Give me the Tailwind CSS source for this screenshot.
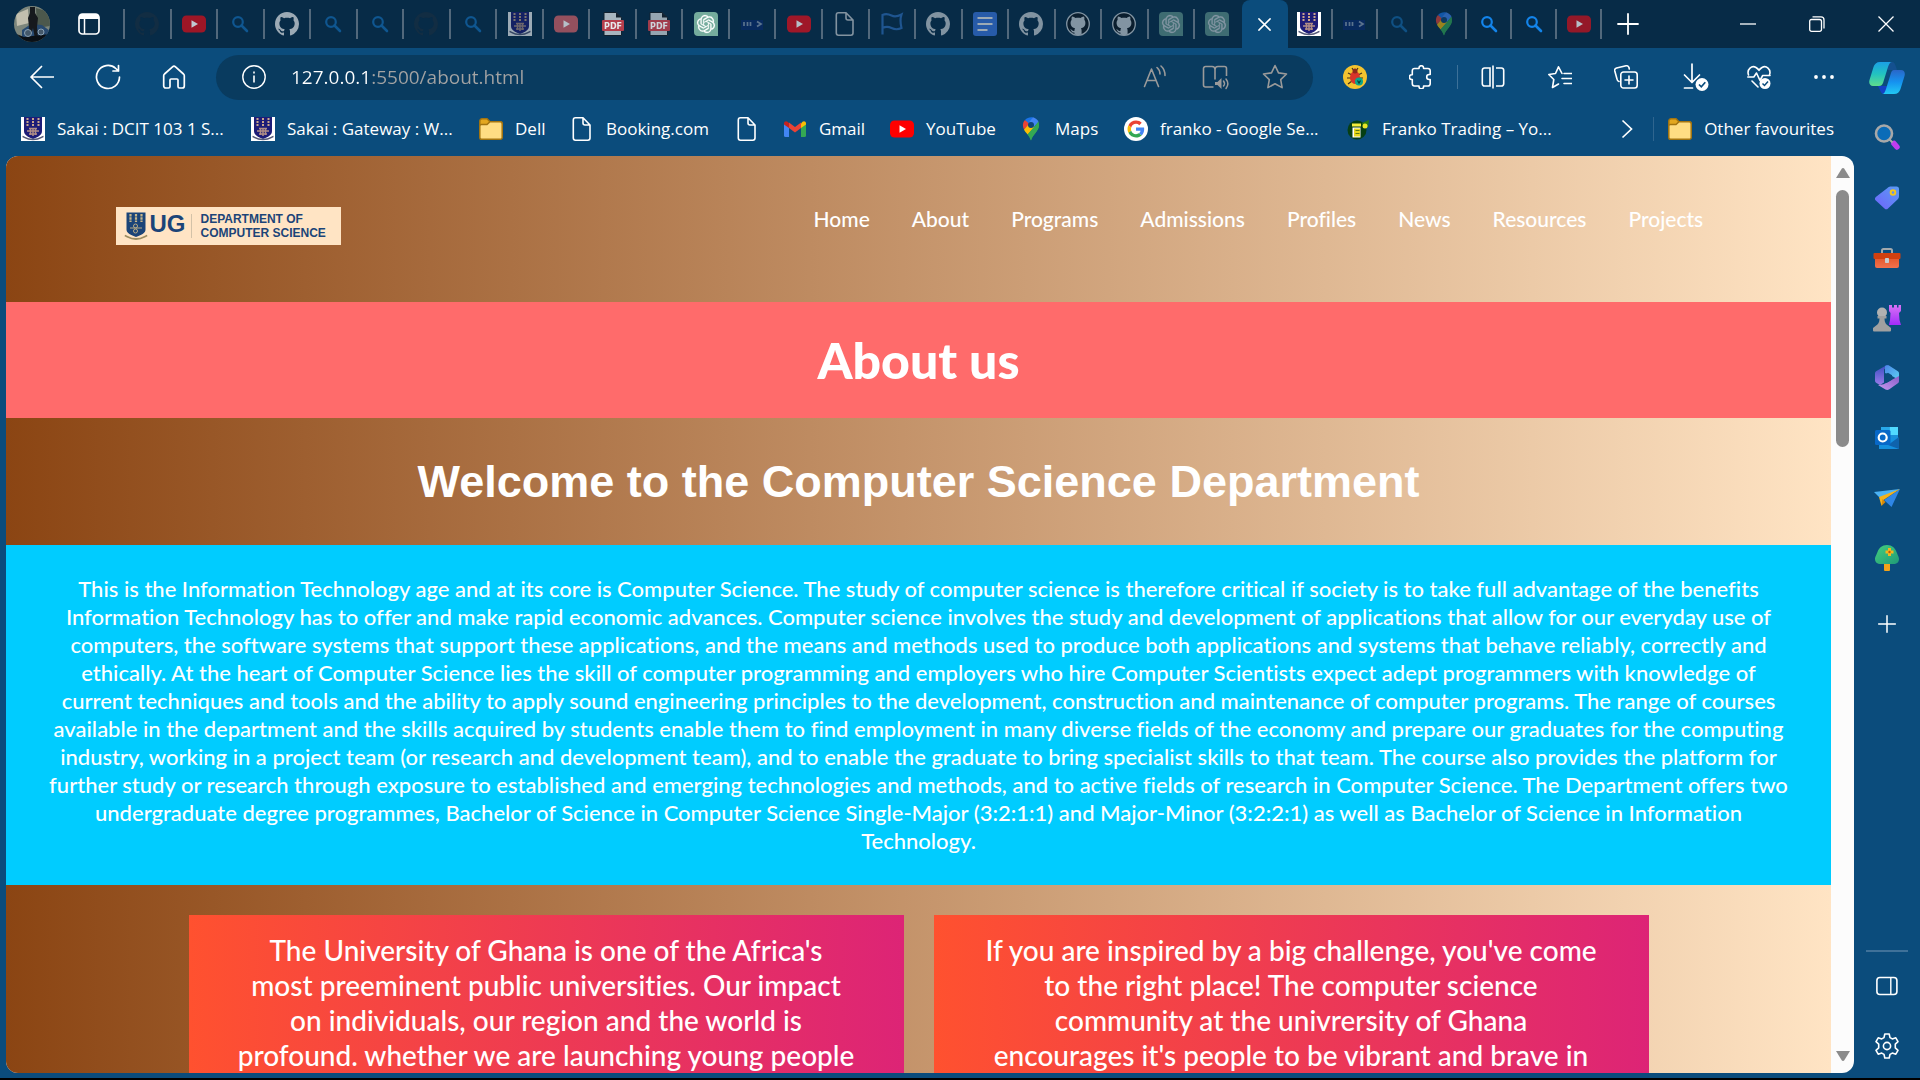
<!DOCTYPE html>
<html lang="en">
<head>
<meta charset="utf-8">
<title>About us</title>
<script src="https://cdn.jsdelivr.net/npm/@tailwindcss/browser@4"></script>
</head>
<body class="flex h-screen flex-col overflow-hidden border-b-2 border-black bg-[#0b4c7c] font-['Open_Sans',sans-serif] text-white">

<svg class="absolute h-0 w-0" aria-hidden="true">
  <defs>
    <linearGradient id="cp1" x1="0" y1="0" x2="0" y2="1"><stop offset="0" stop-color="#1ba0e6"/><stop offset=".5" stop-color="#22c3c0"/><stop offset="1" stop-color="#5fdc8c"/></linearGradient>
    <linearGradient id="cp2" x1="0" y1="0" x2="0" y2="1"><stop offset="0" stop-color="#2a66c8"/><stop offset=".5" stop-color="#1592f0"/><stop offset="1" stop-color="#22c8f4"/></linearGradient>
    <linearGradient id="tagG" x1="1" y1="0" x2="0" y2="1"><stop offset="0" stop-color="#5a9cf5"/><stop offset="1" stop-color="#6f63fb"/></linearGradient>
    <linearGradient id="tbG" x1="0" y1="0" x2="0" y2="1"><stop offset="0" stop-color="#e2562a"/><stop offset="1" stop-color="#f2714d"/></linearGradient>
    <linearGradient id="rookG" x1="0" y1="0" x2="0" y2="1"><stop offset="0" stop-color="#d873f5"/><stop offset="1" stop-color="#a22bfa"/></linearGradient>
    <linearGradient id="m1" x1="0" y1="0" x2="1" y2="1"><stop offset="0" stop-color="#4a86e8"/><stop offset="1" stop-color="#5bd0f2"/></linearGradient>
    <linearGradient id="m2" x1="0" y1="0" x2="0" y2="1"><stop offset="0" stop-color="#3a4fc0"/><stop offset="1" stop-color="#9a7bea"/></linearGradient>
    <linearGradient id="m3" x1="0" y1="1" x2="1" y2="0"><stop offset="0" stop-color="#c79af0"/><stop offset="1" stop-color="#8a5cc8"/></linearGradient>
    <linearGradient id="treeG" x1="0" y1="0" x2="1" y2="1"><stop offset="0" stop-color="#45cf7d"/><stop offset="1" stop-color="#1f9a78"/></linearGradient>
  </defs>
  <symbol id="gh" viewBox="0 0 16 16"><path fill="currentColor" d="M8 0C3.58 0 0 3.58 0 8c0 3.54 2.29 6.53 5.47 7.59.4.07.55-.17.55-.38 0-.19-.01-.82-.01-1.49-2.01.37-2.53-.49-2.69-.94-.09-.23-.48-.94-.82-1.13-.28-.15-.68-.52-.01-.53.63-.01 1.08.58 1.23.82.72 1.21 1.87.87 2.33.66.07-.52.28-.87.51-1.07-1.78-.2-3.64-.89-3.64-3.95 0-.87.31-1.59.82-2.15-.08-.2-.36-1.02.08-2.12 0 0 .67-.21 2.2.82.64-.18 1.32-.27 2-.27.68 0 1.36.09 2 .27 1.53-1.04 2.2-.82 2.2-.82.44 1.1.16 1.92.08 2.12.51.56.82 1.27.82 2.15 0 3.07-1.87 3.75-3.65 3.95.29.25.54.73.54 1.48 0 1.07-.01 1.93-.01 2.2 0 .21.15.46.55.38A8.013 8.013 0 0016 8c0-4.42-3.58-8-8-8z"/></symbol>
  <symbol id="ghc" viewBox="0 0 24 24"><circle cx="12" cy="12" r="11.3" fill="#0b1e2e" stroke="#8294a2" stroke-width="1.3"/><path fill="#8294a2" d="M6 4.500c1.500.2 2.600.8 3.400 1.500 1.600-.4 3.600-.4 5.200 0 .8-.7 1.900-1.300 3.400-1.500.6 1.300.5 2.500.3 3.300 1 1.200 1.300 2.600 1 4.500-.4 2.500-2 3.500-4.300 4 .5.800.6 1.500.6 2.500v3.700c-2.400.8-4.800.8-7.200 0v-2c-2 .3-2.600-.6-3.300-2-.3-.6-.7-.9-1.100-1.200 1.900-.2 2.200 2.200 4.400 1.600 0-.9.200-1.800.6-2.600-2.300-.5-3.900-1.500-4.300-4-.3-1.900 0-3.300 1-4.500-.2-.8-.3-2 .3-3.300z"/></symbol>
  <symbol id="yt" viewBox="0 0 24 24"><rect y="3.500" width="24" height="17" rx="4.500" fill="currentColor"/><path d="M9.500 8.200v7.600l6.500-3.800z" fill="#fff"/></symbol>
  <symbol id="find" viewBox="0 0 24 24"><circle cx="10" cy="10" r="4.800" fill="none" stroke="currentColor" stroke-width="2.200"/><path d="M13.500 13.500l5.500 5.500" stroke="currentColor" stroke-width="2.600" stroke-linecap="round"/></symbol>
  <symbol id="ug" viewBox="0 0 24 24"><path fill="#fff" d="M0 0h24v24H0z"/><path fill="#1d1c78" d="M3 0h18v14c0 4-4 6-9 8-5-2-9-4-9-8z"/><path stroke="#c9a58a" stroke-width="2" stroke-dasharray="2 1" d="M6.500 1v8M12 1v8M17.500 1v8"/><path fill="none" stroke="#b08d86" stroke-width="1.500" d="M6 14h12M8 11.500h8M8 17h8M12 11v8M9.500 11v7M14.500 11v7"/><path fill="none" stroke="#555a78" stroke-width="1.600" d="M1.500 19.500c2 0 3 3 10.500 3s8.500-3 10.500-3"/></symbol>
  <symbol id="gpt" viewBox="0 0 24 24"><path fill="#75ac9d" d="M4 0h16a4 4 0 014 4v20H4a4 4 0 01-4-4V4a4 4 0 014-4z"/><g transform="translate(3 3) scale(.75)"><path fill="#fff" stroke="#fff" stroke-width=".3" d="M22.2819 9.8211a5.9847 5.9847 0 0 0-.5157-4.9108 6.0462 6.0462 0 0 0-6.5098-2.9A6.0651 6.0651 0 0 0 4.9807 4.1818a5.9847 5.9847 0 0 0-3.9977 2.9 6.0462 6.0462 0 0 0 .7427 7.0966 5.98 5.98 0 0 0 .511 4.9107 6.051 6.051 0 0 0 6.5146 2.9001A5.9847 5.9847 0 0 0 13.2599 24a6.0557 6.0557 0 0 0 5.7718-4.2058 5.9894 5.9894 0 0 0 3.9977-2.9001 6.0557 6.0557 0 0 0-.7475-7.0729zm-9.022 12.6081a4.4755 4.4755 0 0 1-2.8764-1.0408l.1419-.0804 4.7783-2.7582a.7948.7948 0 0 0 .3927-.6813v-6.7369l2.02 1.1686a.071.071 0 0 1 .038.052v5.5826a4.504 4.504 0 0 1-4.4945 4.4944zm-9.6607-4.1254a4.4708 4.4708 0 0 1-.5346-3.0137l.142.0852 4.783 2.7582a.7712.7712 0 0 0 .7806 0l5.8428-3.3685v2.3324a.0804.0804 0 0 1-.0332.0615L9.74 19.9502a4.4992 4.4992 0 0 1-6.1408-1.6464zM2.3408 7.8956a4.485 4.485 0 0 1 2.3655-1.9728V11.6a.7664.7664 0 0 0 .3879.6765l5.8144 3.3543-2.0201 1.1685a.0757.0757 0 0 1-.071 0l-4.8303-2.7865A4.504 4.504 0 0 1 2.3408 7.872zm16.5963 3.8558L13.1038 8.364 15.1192 7.2a.0757.0757 0 0 1 .071 0l4.8303 2.7913a4.4944 4.4944 0 0 1-.6765 8.1042v-5.6772a.79.79 0 0 0-.407-.667zm2.0107-3.0231l-.142-.0852-4.7735-2.7818a.7759.7759 0 0 0-.7854 0L9.409 9.2297V6.8974a.0662.0662 0 0 1 .0284-.0615l4.8303-2.7866a4.4992 4.4992 0 0 1 6.6802 4.66zM8.3065 12.863l-2.02-1.1638a.0804.0804 0 0 1-.038-.0567V6.0742a4.4992 4.4992 0 0 1 7.3757-3.4537l-.142.0805L8.704 5.459a.7948.7948 0 0 0-.3927.6813zm1.0976-2.3654l2.602-1.4998 2.6069 1.4998v2.9994l-2.5974 1.4997-2.6067-1.4997Z"/></g></symbol>
  <symbol id="bits" viewBox="0 0 24 24"><path fill="#0a2a6e" d="M1 8h22v10H1z"/><path fill="none" stroke="#93a3bd" stroke-width="1.700" d="M4 10v4M7.500 10v4M10.500 10v4M17 9.500l4 2.500-4 2.500"/></symbol>
  <symbol id="doc" viewBox="0 0 24 24"><path fill="none" stroke="currentColor" stroke-width="1.600" stroke-linejoin="round" d="M5.500.8h7.500L20 8v13a2.200 2.200 0 01-2.200 2.200H5.500A2.200 2.200 0 013.300 21V3A2.200 2.200 0 015.500.8zM13 .8V6a2 2 0 002 2h5"/></symbol>
  <symbol id="flag" viewBox="0 0 24 24"><path fill="none" stroke="currentColor" stroke-width="2.200" d="M2.500 22.500V3c3-1.500 6-1 9 .5s6 1 10-1c-1.300 4-1.300 8.500 0 13.500-4 2-7 1.500-10 0s-6-1.500-9 0"/></symbol>
  <symbol id="gdoc" viewBox="0 0 24 24"><rect width="24" height="24" rx="3" fill="#3d7bea"/><path stroke="#fff" stroke-width="2.200" d="M4.500 6h15M4.500 12h15M4.500 18h10"/></symbol>
  <symbol id="pin" viewBox="0 0 24 24"><path fill="#34a853" d="M5 12.500C7 16 10.500 18 12 23.500 13.500 18 20 14 20 8z"/><path fill="#fbbc04" d="M5 12.500c1 2 2.400 3.500 3.600 5L15.500 10 9 6.500z"/><path fill="#ea4335" d="M6 3C3.500 5.500 3.400 9.500 5 12.500L11 6z"/><path fill="#1a73e8" d="M6 3l4.500 4L14 .5C11 0 8 .8 6 3z"/><path fill="#4285f4" d="M14 .3l-4.500 5.700 2 4.500 4-1L19.500 5C18.500 2.700 16.500 1 14 .3z"/><path fill="#34a853" d="M19.500 4.500L8.600 17.500c1.500 2 2.600 4 3.400 6C13.500 17 20 14.500 20 8c0-1.200-.1-2.400-.5-3.500z"/><circle cx="12" cy="8" r="3" fill="#0f4577"/></symbol>
  <symbol id="folder" viewBox="0 0 24 24"><path fill="#e3a71f" stroke="#a37410" stroke-width="1.500" d="M.8 4A2.200 2.200 0 013 1.800h5l3 3h10A2.200 2.200 0 0123.200 7v10H.8z"/><path fill="#ffdd83" stroke="#a37410" stroke-width="1.500" d="M.8 9A1.500 1.500 0 012.300 7.500H8l3-2.700h10A2.200 2.200 0 0123.200 7v13.500a1.800 1.800 0 01-1.800 1.800H2.600a1.800 1.800 0 01-1.800-1.800z"/></symbol>
  <symbol id="plus" viewBox="0 0 24 24"><path stroke="currentColor" stroke-width="1.800" stroke-linecap="round" d="M12 2v20M2 12h20"/></symbol>
  <symbol id="x" viewBox="0 0 24 24"><path stroke="currentColor" stroke-width="2.400" stroke-linecap="round" d="M3 3l18 18M21 3L3 21"/></symbol>
</svg>

<!-- Tab strip -->
<header class="flex h-12 shrink-0 items-center bg-[#072b47]">
  <div class="flex w-[123px] shrink-0 items-center">
    <button aria-label="Profile" class="ml-[14px]">
      <svg class="h-9 w-9" viewBox="0 0 36 36"><clipPath id="av"><circle cx="18" cy="18" r="18"/></clipPath><g clip-path="url(#av)"><path fill="#7d867c" d="M0 0h36v36H0z"/><path fill="#c2bfae" d="M2 8l12-5 1 14L3 20z"/><path fill="#4c584c" d="M22 2l14 4v14l-13 2z"/><path fill="#27496f" d="M8 24l9-6 11 1 8 6v6l-28 3z"/><path fill="#16191d" d="M16 1h5v6l3 5-1 9 1 12h-3l-2-11-3 11h-3l2-12-1-9 2-5z"/><path fill="#0a1016" d="M0 27l10 4 26-3v8H0z"/><circle cx="14" cy="27" r="3.500" fill="#44586a" stroke="#8ba2b5"/><circle cx="27" cy="26" r="3" fill="#44586a" stroke="#8ba2b5"/></g></svg>
    </button>
    <button aria-label="Tab actions" class="ml-7">
      <svg class="h-[22px] w-[22px]" viewBox="0 0 22 22"><rect x="1" y="1" width="20" height="20" rx="3.500" fill="none" stroke="#fff" stroke-width="1.700"/><path fill="#fff" d="M1 3.500A2.500 2.500 0 013.500 1h15A2.500 2.500 0 0121 3.500V6H1z"/><path stroke="#fff" stroke-width="1.500" d="M6.500 6v15"/></svg>
    </button>
  </div>
  <div class="flex h-[30px] flex-[1118] items-stretch border-l-2 border-[#52687b] pr-[2px]">
    <button aria-label="Tab" class="flex flex-1 items-center justify-center border-r-2 border-[#52687b] text-[#122d43]"><svg class="size-6"><use href="#gh"/></svg></button>
    <button aria-label="Tab" class="flex flex-1 items-center justify-center border-r-2 border-[#52687b] text-[#d0101c]"><svg class="size-6 opacity-75"><use href="#yt"/></svg></button>
    <button aria-label="Tab" class="flex flex-1 items-center justify-center border-r-2 border-[#52687b] text-[#0f5690]"><svg class="size-6"><use href="#find"/></svg></button>
    <button aria-label="Tab" class="flex flex-1 items-center justify-center border-r-2 border-[#52687b] text-[#9caab5]"><svg class="size-6"><use href="#gh"/></svg></button>
    <button aria-label="Tab" class="flex flex-1 items-center justify-center border-r-2 border-[#52687b] text-[#0f5690]"><svg class="size-6"><use href="#find"/></svg></button>
    <button aria-label="Tab" class="flex flex-1 items-center justify-center border-r-2 border-[#52687b] text-[#0f5690]"><svg class="size-6"><use href="#find"/></svg></button>
    <button aria-label="Tab" class="flex flex-1 items-center justify-center border-r-2 border-[#52687b] text-[#122d43]"><svg class="size-6"><use href="#gh"/></svg></button>
    <button aria-label="Tab" class="flex flex-1 items-center justify-center border-r-2 border-[#52687b] text-[#0f5690]"><svg class="size-6"><use href="#find"/></svg></button>
    <button aria-label="Tab" class="flex flex-1 items-center justify-center border-r-2 border-[#52687b]"><svg class="size-6 opacity-60"><use href="#ug"/></svg></button>
    <button aria-label="Tab" class="flex flex-1 items-center justify-center border-r-2 border-[#52687b] text-[#d06068]"><svg class="size-6 opacity-70"><use href="#yt"/></svg></button>
    <button aria-label="Tab" class="flex flex-1 items-center justify-center border-r-2 border-[#52687b]"><svg class="size-6 opacity-90" viewBox="0 0 24 24"><path fill="#b9c4cc" stroke="#14202c" d="M3 .5h12l5.500 5v18H3z"/><path fill="#14202c" d="M15 .5v5h5.500z"/><rect x="1" y="8" width="22" height="11" rx="1" fill="#c8414d"/><text x="12" y="16.800" text-anchor="middle" font-family="DejaVu Sans" font-weight="700" font-size="8" fill="#fff">PDF</text></svg></button>
    <button aria-label="Tab" class="flex flex-1 items-center justify-center border-r-2 border-[#52687b]"><svg class="size-6 opacity-80" viewBox="0 0 24 24"><path fill="#b9c4cc" stroke="#14202c" d="M3 .5h12l5.500 5v18H3z"/><path fill="#14202c" d="M15 .5v5h5.500z"/><rect x="1" y="8" width="22" height="11" rx="1" fill="#c8414d"/><text x="12" y="16.800" text-anchor="middle" font-family="DejaVu Sans" font-weight="700" font-size="8" fill="#fff">PDF</text></svg></button>
    <button aria-label="Tab" class="flex flex-1 items-center justify-center border-r-2 border-[#52687b]"><svg class="size-6"><use href="#gpt"/></svg></button>
    <button aria-label="Tab" class="flex flex-1 items-center justify-center border-r-2 border-[#52687b]"><svg class="size-6 opacity-60"><use href="#bits"/></svg></button>
    <button aria-label="Tab" class="flex flex-1 items-center justify-center border-r-2 border-[#52687b] text-[#e00f1c]"><svg class="size-6 opacity-70"><use href="#yt"/></svg></button>
    <button aria-label="Tab" class="flex flex-1 items-center justify-center border-r-2 border-[#52687b] text-[#8393a0]"><svg class="size-6"><use href="#doc"/></svg></button>
    <button aria-label="Tab" class="flex flex-1 items-center justify-center border-r-2 border-[#52687b] text-[#1f5590]"><svg class="size-6"><use href="#flag"/></svg></button>
    <button aria-label="Tab" class="flex flex-1 items-center justify-center border-r-2 border-[#52687b] text-[#8193a1]"><svg class="size-6"><use href="#gh"/></svg></button>
    <button aria-label="Tab" class="flex flex-1 items-center justify-center border-r-2 border-[#52687b]"><svg class="size-6 opacity-60"><use href="#gdoc"/></svg></button>
    <button aria-label="Tab" class="flex flex-1 items-center justify-center border-r-2 border-[#52687b] text-[#8193a1]"><svg class="size-6"><use href="#gh"/></svg></button>
    <button aria-label="Tab" class="flex flex-1 items-center justify-center border-r-2 border-[#52687b]"><svg class="size-6"><use href="#ghc"/></svg></button>
    <button aria-label="Tab" class="flex flex-1 items-center justify-center border-r-2 border-[#52687b]"><svg class="size-6"><use href="#ghc"/></svg></button>
    <button aria-label="Tab" class="flex flex-1 items-center justify-center border-r-2 border-[#52687b]"><svg class="size-6 opacity-50"><use href="#gpt"/></svg></button>
    <button aria-label="Tab" class="flex flex-1 items-center justify-center"><svg class="size-6 opacity-50"><use href="#gpt"/></svg></button>
  </div>
  <button aria-label="Close current tab" class="flex h-full w-[46px] shrink-0 items-center justify-center rounded-t-lg bg-[#0b4c7c]"><svg class="size-[15px]"><use href="#x"/></svg></button>
  <div class="flex h-[30px] flex-[315] items-stretch">
    <button aria-label="Tab" class="flex flex-1 items-center justify-center border-r-2 border-[#52687b]"><svg class="size-6"><use href="#ug"/></svg></button>
    <button aria-label="Tab" class="flex flex-1 items-center justify-center border-r-2 border-[#52687b]"><svg class="size-6 opacity-60"><use href="#bits"/></svg></button>
    <button aria-label="Tab" class="flex flex-1 items-center justify-center border-r-2 border-[#52687b] text-[#0f5083]"><svg class="size-6"><use href="#find"/></svg></button>
    <button aria-label="Tab" class="flex flex-1 items-center justify-center border-r-2 border-[#52687b]"><svg class="size-6 opacity-60"><use href="#pin"/></svg></button>
    <button aria-label="Tab" class="flex flex-1 items-center justify-center border-r-2 border-[#52687b] text-[#1384ea]"><svg class="size-6"><use href="#find"/></svg></button>
    <button aria-label="Tab" class="flex flex-1 items-center justify-center border-r-2 border-[#52687b] text-[#1384ea]"><svg class="size-6"><use href="#find"/></svg></button>
    <button aria-label="Tab" class="flex flex-1 items-center justify-center border-r-2 border-[#52687b] text-[#d0101c]"><svg class="size-6 opacity-70"><use href="#yt"/></svg></button>
  </div>
  <div class="flex w-[318px] shrink-0 items-center">
    <button aria-label="New tab" class="ml-[14px]"><svg class="size-6"><use href="#plus"/></svg></button>
    <div class="ml-auto flex">
      <button aria-label="Minimise" class="flex w-[69px] justify-center"><svg class="size-4" viewBox="0 0 16 16"><path stroke="#fff" stroke-width="1.300" d="M0 8h16"/></svg></button>
      <button aria-label="Restore" class="flex w-[69px] justify-center"><svg class="size-4" viewBox="0 0 16 16"><path fill="none" stroke="#fff" stroke-width="1.300" d="M2.500 3.500h8a2 2 0 012 2v8a1.800 1.800 0 01-1.800 1.800H2.500a1.800 1.800 0 01-1.800-1.800V5.300a1.800 1.800 0 011.800-1.800zM3.500.9h8.500a3 3 0 013 3v8.500"/></svg></button>
      <button aria-label="Close" class="flex w-[69px] justify-center"><svg class="size-4" viewBox="0 0 16 16"><path stroke="#fff" stroke-width="1.300" d="M.5.5l15 15M15.500.5l-15 15"/></svg></button>
    </div>
  </div>
</header>

<div class="flex min-h-0 flex-1">
  <div class="flex min-w-0 flex-1 flex-col pb-[5px]">

    <!-- Toolbar -->
    <div class="flex h-[58px] shrink-0 items-center pl-[9px]">
      <button aria-label="Back" class="flex w-[66px] justify-center"><svg class="size-6" viewBox="0 0 24 24"><path fill="none" stroke="#fff" stroke-width="1.700" stroke-linecap="round" stroke-linejoin="round" d="M23.500 12H1M11.500 1.500L1 12l10.500 10.500"/></svg></button>
      <button aria-label="Refresh" class="flex w-[66px] justify-center"><svg class="size-[26px]" viewBox="0 0 26 26"><path fill="none" stroke="#fff" stroke-width="1.700" stroke-linecap="round" stroke-linejoin="round" d="M24.500 13A11.500 11.500 0 1120.800 4.500L23.500 7M23.500 1.500V7H18"/></svg></button>
      <button aria-label="Home" class="flex w-[66px] justify-center"><svg class="size-6" viewBox="0 0 24 24"><path fill="none" stroke="#fff" stroke-width="1.700" stroke-linejoin="round" d="M10.500 1.800a2.200 2.200 0 013 0l8 7.200c.5.500.8 1.100.8 1.800v10.200a2 2 0 01-2 2h-2.800a1.500 1.500 0 01-1.500-1.500V15a1 1 0 00-1-1H9a1 1 0 00-1 1v6.500A1.500 1.500 0 016.500 23H3.700a2 2 0 01-2-2V10.800c0-.7.3-1.300.8-1.800z"/></svg></button>
      <div class="ml-[9px] flex h-[45px] min-w-0 flex-1 items-center rounded-full bg-[#093b5f] pr-2">
        <button aria-label="Site information" class="flex w-[75px] shrink-0 justify-center"><svg class="size-6" viewBox="0 0 24 24"><circle cx="12" cy="12" r="11.200" fill="none" stroke="#fff" stroke-width="1.400"/><path stroke="#fff" stroke-width="1.600" d="M12 10.500v7M12 6.500v2"/></svg></button>
        <input type="text" aria-label="Address" value="127.0.0.1:5500/about.html" class="min-w-0 flex-1 bg-[linear-gradient(to_right,#fff_80px,#a3a3a3_80px)] bg-clip-text text-[19px] leading-7 text-transparent outline-none">
        <button aria-label="Read aloud" class="flex w-[60px] shrink-0 justify-center"><svg class="size-6" viewBox="0 0 24 24"><path fill="none" stroke="#9a9a9a" stroke-width="1.600" stroke-linecap="round" stroke-linejoin="round" d="M1.500 21.500L8.500 4l7 17.500M4 15.500h9M14 2.500c2 1.800 3 3.800 3 6.500M18 1c2.800 2.500 4 5.500 4 9.500"/></svg></button>
        <button aria-label="Immersive reader" class="flex w-[60px] shrink-0 justify-center"><svg class="size-6 overflow-visible" viewBox="0 0 24 24"><path fill="none" stroke="#9a9a9a" stroke-width="1.600" stroke-linejoin="round" d="M10.500 22H2.500A2 2 0 01.500 20V3.500a2 2 0 012-2H9a3 3 0 013 3v9.500V4.500a3 3 0 013-3h6.500a2 2 0 012 2V11"/><path fill="#9a9a9a" d="M12 17h2.500l4-4v11l-4-4H12z"/><path fill="none" stroke="#9a9a9a" stroke-width="1.500" stroke-linecap="round" d="M20.500 16c1.200 1.500 1.200 3.500 0 5M23 14c2.200 2.800 2.200 6.500 0 9.500"/></svg></button>
        <button aria-label="Add to favourites" class="flex w-[60px] shrink-0 justify-center"><svg class="size-[26px]" viewBox="0 0 26 26"><path fill="none" stroke="#9a9a9a" stroke-width="1.600" stroke-linejoin="round" d="M13 1.500l3.500 7.400 8 1.100-5.800 5.600 1.400 8L13 19.800l-7.100 3.800 1.400-8L1.500 10l8-1.100z"/></svg></button>
      </div>
      <button aria-label="Bug extension" class="ml-2 flex w-[68px] justify-center"><svg class="size-6" viewBox="0 0 24 24"><circle cx="12" cy="12" r="12" fill="#f4c32f"/><path stroke="#44311d" stroke-width="1.200" fill="none" d="M5 8l4 2M19 8l-4 2M4 13h5M20 13h-5M5 19l4-3M9 3l2 3M15 3l-2 3"/><ellipse cx="12" cy="12.500" rx="5" ry="6.500" fill="#d8352a"/><circle cx="12" cy="6" r="2.500" fill="#8c2b1c"/><circle cx="16" cy="16.500" r="4" fill="#0aa58c"/><path stroke="#073b34" stroke-width="1.200" fill="none" d="M14.500 15.500L16 18l1.500-2.500"/></svg></button>
      <button aria-label="Extensions" class="flex w-[64px] justify-center"><svg class="size-6" viewBox="0 0 24 24"><path fill="none" stroke="#fff" stroke-width="1.600" stroke-linejoin="round" d="M5.500 3.500H10V3a2.300 2.300 0 014.600 0v.5H19a2.200 2.200 0 012.200 2.200V9.500h-1a2.500 2.500 0 000 5h1v4.300A2.200 2.200 0 0119 21h-4.400v.5a2.300 2.300 0 01-4.600 0V21H5.500a2.200 2.200 0 01-2.200-2.200V14.500h-.5a2.400 2.400 0 010-4.800h.5v-4A2.200 2.200 0 015.500 3.500z"/></svg></button>
      <span class="ml-1 h-6 w-px bg-[#3d7199]"></span>
      <button aria-label="Split screen" class="ml-px flex w-[68px] justify-center"><svg class="size-6" viewBox="0 0 24 24"><path fill="none" stroke="#fff" stroke-width="1.600" d="M9 21H3.500a2.200 2.200 0 01-2.200-2.200V5.200A2.200 2.200 0 013.500 3H9zM15 3h5.500a2.200 2.200 0 012.200 2.200v13.600a2.200 2.200 0 01-2.200 2.200H15M12 .5v23"/></svg></button>
      <button aria-label="Favourites" class="flex w-[66px] justify-center"><svg class="size-6" viewBox="0 0 24 24"><path fill="none" stroke="#fff" stroke-width="1.600" stroke-linejoin="round" stroke-linecap="round" d="M14 8.500L10.500 1.800 7.500 8.500.8 9.500l5 5-1.300 8 6-3.500M16 8.500h7.500M14 13.500h9.500M16 18.500h7.500"/></svg></button>
      <button aria-label="Collections" class="flex w-[66px] justify-center"><svg class="size-6" viewBox="0 0 24 24"><path fill="none" stroke="#fff" stroke-width="1.600" stroke-linecap="round" stroke-linejoin="round" d="M5 16.500A3 3 0 013 14L.800 6a2.500 2.500 0 011.800-3L12 .8a2.500 2.500 0 013 2l.3 1.200M9.500 7h11A2.700 2.700 0 0123.200 9.700v10.600a2.700 2.700 0 01-2.700 2.700H9.500a2.700 2.700 0 01-2.700-2.700V9.700A2.700 2.700 0 019.500 7zM15 11v8M11 15h8"/></svg></button>
      <button aria-label="Downloads" class="flex w-[68px] justify-center pl-1"><svg class="size-7" viewBox="0 0 28 28"><path fill="none" stroke="#fff" stroke-width="1.700" stroke-linecap="round" stroke-linejoin="round" d="M11 1v18M3.500 12L11 19.500l7.500-7.500M3.500 25h8"/><circle cx="21" cy="21.500" r="6.500" fill="#fff"/><path fill="none" stroke="#0b4c7c" stroke-width="1.700" d="M18 21.500l2.300 2.300 4-4.500"/></svg></button>
      <button aria-label="Browser essentials" class="flex w-[64px] justify-center"><svg class="size-6" viewBox="0 0 24 24"><path fill="none" stroke="#fff" stroke-width="1.600" stroke-linecap="round" stroke-linejoin="round" d="M1.500 10C-.5 4 5 0 9 2.500c1.500.9 2.300 1.800 3 2.800.7-1 1.500-1.900 3-2.800C19 0 24.500 4 22.500 10M.8 12h6l2.700-4 3.500 7.500 2.700-5H23M5 16l6 6"/><circle cx="18" cy="18.500" r="5.500" fill="#fff"/><path fill="none" stroke="#0b4c7c" stroke-width="1.500" d="M15.500 18.500l2 2 3.500-4"/></svg></button>
      <button aria-label="Settings and more" class="mr-[-3px] flex w-[66px] justify-center"><svg class="size-6" viewBox="0 0 24 24"><circle cx="4" cy="12" r="1.900" fill="#fff"/><circle cx="12" cy="12" r="1.900" fill="#fff"/><circle cx="20" cy="12" r="1.900" fill="#fff"/></svg></button>
    </div>

    <!-- Bookmarks -->
    <nav aria-label="Bookmarks" class="mb-1 flex h-[46px] shrink-0 items-center pl-[21px] text-[17px] leading-6 whitespace-nowrap">
      <a href="#" class="flex w-[230px] items-center gap-3"><svg class="size-6"><use href="#ug"/></svg>Sakai : DCIT 103 1 S...</a>
      <a href="#" class="flex w-[228px] items-center gap-3"><svg class="size-6"><use href="#ug"/></svg>Sakai : Gateway : W...</a>
      <a href="#" class="flex w-[91px] items-center gap-3"><svg class="size-6"><use href="#folder"/></svg>Dell</a>
      <a href="#" class="flex w-[165px] items-center gap-3"><svg class="size-6"><use href="#doc"/></svg>Booking.com</a>
      <a href="#" aria-label="Untitled page" class="flex w-[48px] items-center"><svg class="size-6"><use href="#doc"/></svg></a>
      <a href="#" class="flex w-[107px] items-center gap-3"><svg class="size-6" viewBox="0 0 24 24"><path fill="#4285f4" d="M1 6l5 4v10H2.500A1.500 1.500 0 011 18.500z"/><path fill="#34a853" d="M18 10l5-4v12.500a1.500 1.500 0 01-1.500 1.500H18z"/><path fill="#fbbc04" d="M18 6.500l1.500-1.700C21 3.600 23 4.500 23 6.500v1L18 11z"/><path fill="#ea4335" d="M6 11V5.500l6 4.500 6-4.500V11l-6 4.500z"/><path fill="#c5221f" d="M1 6.500c0-2 2-2.900 3.500-1.700L6 6v5L1 7.500z"/></svg>Gmail</a>
      <a href="#" class="flex w-[129px] items-center gap-3 text-[#f00]"><svg class="size-6"><use href="#yt"/></svg><span class="text-white">YouTube</span></a>
      <a href="#" class="flex w-[105px] items-center gap-3"><svg class="size-6"><use href="#pin"/></svg>Maps</a>
      <a href="#" class="flex w-[222px] items-center gap-3"><svg class="size-6" viewBox="0 0 48 48"><circle cx="24" cy="24" r="24" fill="#fff"/><g transform="translate(7 7) scale(.71)"><path fill="#EA4335" d="M24 9.500c3.540 0 6.710 1.220 9.210 3.600l6.850-6.850C35.900 2.380 30.470 0 24 0 14.620 0 6.510 5.380 2.560 13.220l7.980 6.190C12.430 13.720 17.740 9.500 24 9.500z"/><path fill="#4285F4" d="M46.980 24.550c0-1.570-.15-3.090-.38-4.550H24v9.020h12.940c-.58 2.960-2.260 5.480-4.780 7.180l7.730 6c4.510-4.180 7.090-10.360 7.090-17.650z"/><path fill="#FBBC05" d="M10.530 28.590c-.48-1.450-.76-2.990-.76-4.590s.27-3.140.76-4.590l-7.980-6.190C.92 16.460 0 20.120 0 24c0 3.880.92 7.540 2.560 10.780l7.970-6.190z"/><path fill="#34A853" d="M24 48c6.480 0 11.930-2.130 15.890-5.810l-7.730-6c-2.150 1.450-4.920 2.300-8.160 2.300-6.260 0-11.570-4.220-13.470-9.910l-7.980 6.190C6.510 42.620 14.620 48 24 48z"/></g></svg>franko - Google Se...</a>
      <a href="#" class="flex items-center gap-3"><svg class="size-6" viewBox="0 0 24 24"><circle cx="11" cy="13" r="9.500" fill="#063f14"/><path fill="#f6ee3c" d="M6 6.500h9v3H6z"/><path fill="#fff" d="M6.500 10.500h8v10h-8z"/><path fill="#e8d81c" d="M8 11.500h6v8H8z"/><path fill="#5a7a12" d="M9.500 13h4v1h-4zM9.500 16h4v1h-4z"/><path fill="#2b7a12" d="M16 6l7-3-1 7-4 1z"/><circle cx="19" cy="9" r="2.500" fill="#e9e42a"/></svg>Franko Trading – Yo...</a>
      <button aria-label="More bookmarks" class="mr-5 ml-auto"><svg class="h-5 w-3" viewBox="0 0 12 20"><path fill="none" stroke="#fff" stroke-width="1.700" d="M1.500 1.500L10.500 10l-9 8.500"/></svg></button>
      <span class="mr-[14px] h-6 w-px bg-[#2f658f]"></span>
      <a href="#" class="mr-5 flex items-center gap-3"><svg class="size-6"><use href="#folder"/></svg>Other favourites</a>
    </nav>

    <!-- Page viewport -->
    <div class="ml-[6px] flex min-h-0 flex-1 overflow-hidden rounded-xl bg-[#fcfcfc]">
      <main class="min-w-0 flex-1 overflow-hidden bg-[linear-gradient(to_right,#8b4513,#ffe4c4)] text-center font-['Lato',sans-serif] font-medium [font-variant-ligatures:no-common-ligatures]">
        <div class="flex h-[146px] items-start justify-between pt-[51px] pr-[7%] pl-[6%]">
          <a href="#" class="flex h-[38px] w-[225px] items-center bg-[#ffe4c4] pl-2 font-['Liberation_Sans',sans-serif] font-bold text-[#1b4478]">
            <svg class="h-7 w-6" viewBox="0 0 24 28"><path fill="#1b4478" d="M2.500.5h19v17c0 4-4.500 5.500-9.500 7.500-5-2-9.500-3.500-9.500-7.500z"/><path stroke="#c8b68a" stroke-width="2.200" stroke-dasharray="2.500 .8" d="M6.500 2v8M12 2v8M17.500 2v8"/><path fill="none" stroke="#b9ab86" d="M6 16h12M9.500 14a2 2 0 104 0 2 2 0 10-4 0M9.500 19a2 2 0 104 0 2 2 0 10-4 0"/><path fill="none" stroke="#9c8c60" stroke-width="1.800" d="M.8 23.500c3 1 5 3.500 11.200 3.500s8.200-2.500 11.200-3.500"/></svg>
            <span class="ml-[2px] pb-1 text-2xl leading-7">UG</span>
            <span class="ml-[5px] h-6 w-px bg-[#d3c2a8]"></span>
            <span class="ml-[9px] pb-px text-left text-[12px] leading-[14px]">DEPARTMENT OF<br>COMPUTER SCIENCE</span>
          </a>
          <ul class="flex gap-[42px] text-[21px] leading-6">
            <li><a href="#">Home</a></li>
            <li><a href="#">About</a></li>
            <li><a href="#">Programs</a></li>
            <li><a href="#">Admissions</a></li>
            <li><a href="#">Profiles</a></li>
            <li><a href="#">News</a></li>
            <li><a href="#">Resources</a></li>
            <li><a href="#">Projects</a></li>
          </ul>
        </div>
        <h1 class="bg-[#ff6b6b] py-7 text-[50px] leading-[60px] font-black">About us</h1>
        <h2 class="py-8 font-['Liberation_Sans',sans-serif] text-[45px] leading-[63px] font-bold">Welcome to the Computer Science Department</h2>
        <p class="bg-[#00ccff] py-[30px] text-[22px] leading-7 whitespace-nowrap">This is the Information Technology age and at its core is Computer Science. The study of computer science is therefore critical if society is to take full advantage of the benefits<br>Information Technology has to offer and make rapid economic advances. Computer science involves the study and development of applications that allow for our everyday use of<br>computers, the software systems that support these applications, and the means and methods used to produce both applications and systems that behave reliably, correctly and<br>ethically. At the heart of Computer Science lies the skill of computer programming and employers who hire Computer Scientists expect adept programmers with knowledge of<br>current techniques and tools and the ability to apply sound engineering principles to the development, construction and maintenance of computer programs. The range of courses<br>available in the department and the skills acquired by students enable them to find employment in many diverse fields of the economy and prepare our graduates for the computing<br>industry, working in a project team (or research and development team), and to enable the graduate to bring specialist skills to that team. The course also provides the platform for<br>further study or research through exposure to established and emerging technologies and methods, and to active fields of research in Computer Science. The Department offers two<br>undergraduate degree programmes, Bachelor of Science in Computer Science Single-Major (3:2:1:1) and Major-Minor (3:2:2:1) as well as Bachelor of Science in Information<br>Technology.</p>
        <div class="mx-[10%] mt-[30px] grid grid-cols-2 gap-[30px] text-[28px] leading-[35px]">
          <p class="bg-[linear-gradient(to_right,#ff512f,#dd2476)] pt-[18px] pb-10">The University of Ghana is one of the Africa's<br>most preeminent public universities. Our impact<br>on individuals, our region and the world is<br>profound. whether we are launching young people</p>
          <p class="bg-[linear-gradient(to_right,#ff512f,#dd2476)] pt-[18px] pb-10">If you are inspired by a big challenge, you've come<br>to the right place! The computer science<br>community at the univrersity of Ghana<br>encourages it's people to be vibrant and brave in</p>
        </div>
      </main>
      <div class="flex w-[23px] shrink-0 flex-col items-center py-3">
        <svg class="h-[10px] w-[14px]" viewBox="0 0 14 10"><path fill="#8b8b8b" d="M7 0c.6 0 1 .3 1.300.7L14 10H0L5.700.7C6 .3 6.400 0 7 0z"/></svg>
        <div class="mt-3 h-[257px] w-[13px] rounded-full bg-[#8b8b8b]"></div>
        <svg class="mt-auto h-[10px] w-[14px]" viewBox="0 0 14 10"><path fill="#8b8b8b" d="M7 10c-.6 0-1-.3-1.300-.7L0 0h14L8.300 9.300C8 9.700 7.600 10 7 10z"/></svg>
      </div>
    </div>
  </div>

  <!-- Sidebar -->
  <aside class="flex w-[66px] shrink-0 flex-col items-center">
    <button aria-label="Copilot" class="flex h-[59px] items-center"><svg class="h-8 w-9" viewBox="0 0 36 32"><path fill="#14508f" d="M14 0h9c2 0 3 1.500 4 5l1 3h-9z"/><path fill="#1440c4" d="M9 24h10l-1 5c-.5 2-1.500 3-3 3-2 0-3-1.500-4-4z"/><path fill="url(#cp1)" d="M11 0h12c-2 0-3 2-4 5l-5 16c-.8 2-2 3-4 3H4c-3 0-4.500-2.500-3.500-6L4.500 5C5.500 2 7.500 0 11 0z"/><path fill="url(#cp2)" d="M25 8h7c3 0 4.500 2.500 3.500 6l-4 13c-1 3-3 5-6.500 5H13c2 0 3-2 4-5l5-16c.6-2 1.500-3 3-3z"/></svg></button>
    <button aria-label="Search" class="flex h-[60px] items-center"><svg class="size-[26px]" viewBox="0 0 26 26"><path stroke="#c03df0" stroke-width="5.500" stroke-linecap="round" d="M20 19.500l3 3.500"/><path stroke="#a9a9a9" stroke-width="2" d="M15 15l3.500 3.500"/><circle cx="10" cy="9.500" r="8" fill="#0b6cb8" stroke="#a8a8a8" stroke-width="2.600"/></svg></button>
    <button aria-label="Shopping" class="flex h-[61px] items-center"><svg class="size-6" viewBox="0 0 24 24"><path fill="url(#tagG)" d="M12.500 2C13.500 1 14.500.5 16 .5h5.500A2.500 2.500 0 0124 3v7c0 1.500-.5 2.500-1.500 3.500l-9.500 9a2.500 2.500 0 01-3.500 0L.8 14.500a2.500 2.500 0 010-3.500z"/><circle cx="18" cy="6.500" r="2.300" fill="none" stroke="#f2c61f" stroke-width="2"/></svg></button>
    <button aria-label="Tools" class="flex h-[60px] items-center"><svg class="h-6 w-7" viewBox="0 0 28 24"><path fill="none" stroke="#a3a9ad" stroke-width="2" d="M9 7V4.500A1.500 1.500 0 0110.500 3h7A1.500 1.500 0 0119 4.500V7"/><rect x="2" y="11" width="24" height="11" rx="2" fill="url(#tbG)"/><rect x=".5" y="7" width="27" height="6" rx="1" fill="#d1400f"/><rect x="12" y="12" width="4" height="5" rx=".8" fill="#c9ccce"/></svg></button>
    <button aria-label="Games" class="flex h-[60px] items-center"><svg class="size-7" viewBox="0 0 28 28"><path fill="url(#rookG)" d="M16 1h3v2.500h2V1h3v2.500h1.500V1H28v6l-2 2 .5 7L28 21H16l1-5 .5-7L16 7z"/><circle cx="9" cy="8.500" r="5" fill="#b1b1b1"/><path fill="#a0a0a0" d="M4.500 12h9v2.500h-2c0 4 1.500 6 4 7.500l2.500 2v2.500a1 1 0 01-1 1H1a1 1 0 01-1-1V24l2.500-2c2.500-1.500 4-3.500 4-7.500h-2z"/></svg></button>
    <button aria-label="Microsoft 365" class="flex h-[60px] items-center"><svg class="h-[26px] w-6" viewBox="0 0 24 26"><path fill="url(#m2)" d="M1.500 6L11 .5c1-.5 2-.5 3 0L9 4.500v13L5 20l-3.500-2C.5 17.500 0 16.500 0 15.500V8.500c0-1 .5-2 1.500-2.500z"/><path fill="url(#m1)" d="M10 1L11 .5c1-.5 2-.5 3 0L22.500 6c1 .5 1.500 1.500 1.500 2.500V15l-7-4-7-3z"/><path fill="url(#m3)" d="M24 11v5c0 1-.5 2-1.500 2.500L14 24.500c-1 .6-2.500.6-3.500 0L3 20l4-.5c1 0 2-.3 3-1z"/><path fill="#0b4c7c" d="M9.500 9.500l3.500-1.700 4 2.500v4.500L11.500 18l-2-1.500z"/></svg></button>
    <button aria-label="Outlook" class="flex h-[60px] items-center"><svg class="size-6" viewBox="0 0 24 24"><path fill="#1a8fd8" d="M6 1h17v13H6z"/><path fill="#50d9ff" d="M14.500 1H23v8h-8.500z"/><path fill="#28a8ea" d="M6 1h8.500v8H6z"/><path fill="#1490df" d="M4 12h20v11H4z"/><path fill="#0f63ac" d="M24 11L13 19l11 4z"/><rect y="4" width="15.500" height="15" rx="1.500" fill="#0868c8"/><circle cx="7.700" cy="11.500" r="4" fill="none" stroke="#fff" stroke-width="2.200"/></svg></button>
    <button aria-label="Drop" class="flex h-[60px] items-center"><svg class="size-[26px]" viewBox="0 0 26 26"><path fill="#4bb2f4" d="M0 7L26 4 7 14z"/><path fill="#2f86e6" d="M26 4l-8.500 18L10 15z"/><path fill="#f5b21a" d="M26 4L5 12l2.500 9 2-6z"/><path fill="#d88808" d="M7.500 21l1-7 3 3z"/></svg></button>
    <button aria-label="E-tree" class="flex h-[60px] items-center"><svg class="h-[26px] w-6" viewBox="0 0 24 26"><rect x="9" y="18" width="6" height="8" rx="1" fill="#f2a318"/><path fill="url(#treeG)" d="M12 0c5 0 8 3 9.500 7S24 12 24 14c0 3-2 5-6 5H6c-4 0-6-2-6-5 0-2 1-3 2.500-7S7 0 12 0z"/><path stroke="#f7b51c" stroke-width="3" d="M14.500 3v8M10.500 7h8"/><circle cx="14.500" cy="7" r="1.200" fill="#c25a0a"/></svg></button>
    <button aria-label="Customise sidebar" class="flex h-[72px] items-center"><svg class="size-5"><use href="#plus"/></svg></button>
    <div class="mt-auto mb-[2px] flex flex-col items-center">
      <span class="h-[2px] w-[42px] bg-[#3f7199]"></span>
      <button aria-label="Toggle sidebar" class="mt-1 flex h-[60px] items-center"><svg class="h-5 w-[22px]" viewBox="0 0 22 20"><rect x=".9" y="1.500" width="20" height="17" rx="3" fill="none" stroke="#fff" stroke-width="1.600"/><path stroke="#fff" stroke-width="1.400" d="M14.800 2v16"/></svg></button>
      <button aria-label="Settings" class="flex h-[60px] items-center"><svg class="size-[26px]" viewBox="0 0 26 26"><path fill="none" stroke="#fff" stroke-width="1.600" stroke-linejoin="round" d="M10.800 1h4.400l.8 3.600 2.300 1.300 3.500-1.100 2.200 3.800-2.700 2.500v3.800l2.700 2.500-2.200 3.800-3.500-1.100-2.300 1.300-.8 3.600h-4.400L10 21.400l-2.300-1.300-3.500 1.100L2 17.400l2.700-2.500v-3.800L2 8.600l2.200-3.800 3.500 1.100L10 4.600z"/><circle cx="13" cy="13" r="3.600" fill="none" stroke="#fff" stroke-width="1.600"/></svg></button>
    </div>
  </aside>
</div>
</body>
</html>
